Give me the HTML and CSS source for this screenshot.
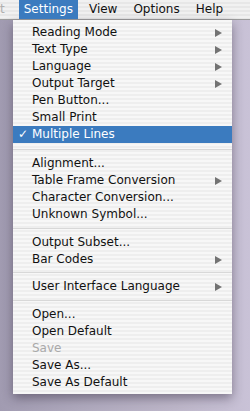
FILE: index.html
```html
<!DOCTYPE html>
<html lang="en">
<head>
    <meta charset="UTF-8">
    <meta name="viewport" content="width=device-width, initial-scale=1.0">
    <title>Settings Menu</title>
    <link rel="stylesheet" href="styles.css">
</head>
<body>
    <div class="menubar">
        <span class="bar-item edge">t</span>
        <span class="bar-item active">Settings</span>
        <span class="bar-item">View</span>
        <span class="bar-item">Options</span>
        <span class="bar-item">Help</span>
    </div>

    <div class="desk">
        <ul class="menu">
            <li class="item"><span class="check"></span>Reading Mode<span class="arrow"></span></li>
            <li class="item"><span class="check"></span>Text Type<span class="arrow"></span></li>
            <li class="item"><span class="check"></span>Language<span class="arrow"></span></li>
            <li class="item"><span class="check"></span>Output Target<span class="arrow"></span></li>
            <li class="item"><span class="check"></span>Pen Button...</li>
            <li class="item"><span class="check"></span>Small Print</li>
            <li class="item selected"><span class="check">✓</span>Multiple Lines</li>
            <li class="sep wide"></li>
            <li class="item"><span class="check"></span>Alignment...</li>
            <li class="item"><span class="check"></span>Table Frame Conversion<span class="arrow"></span></li>
            <li class="item"><span class="check"></span>Character Conversion...</li>
            <li class="item"><span class="check"></span>Unknown Symbol...</li>
            <li class="sep"></li>
            <li class="item"><span class="check"></span>Output Subset...</li>
            <li class="item"><span class="check"></span>Bar Codes<span class="arrow"></span></li>
            <li class="sep short"></li>
            <li class="item"><span class="check"></span>User Interface Language<span class="arrow"></span></li>
            <li class="sep"></li>
            <li class="item"><span class="check"></span>Open...</li>
            <li class="item"><span class="check"></span>Open Default</li>
            <li class="item disabled"><span class="check"></span>Save</li>
            <li class="item"><span class="check"></span>Save As...</li>
            <li class="item"><span class="check"></span>Save As Default</li>
        </ul>
    </div>
</body>
</html>
```

FILE: styles.css
```css
body {
    font-family: 'DejaVu Sans', 'Liberation Sans', sans-serif;
    font-size: 12px;
    color: #111;
    margin: 0;
    padding: 0;
    height: 411px;
    overflow: hidden;
    background: linear-gradient(to right, #a19bb1 0, #aea8bc 30%, #bdb6c9 70%, #c9c2d7 100%);
}

.menubar {
    display: flex;
    gap: 6px;
    height: 19px;
    line-height: 19px;
    border-bottom: 1px solid #9c9c9c;
    background: repeating-linear-gradient(to bottom, #f1f1f1 0, #f1f1f1 2px, #e7e7e7 2px, #e7e7e7 4px);
    white-space: nowrap;
}

.bar-item {
    padding: 0 5px;
}

.bar-item.edge {
    padding: 0 8px 0 0;
    color: #b0b0b0;
}

.bar-item.active {
    background: #3b7bbf;
    color: #fff;
}

.desk {
    padding-left: 13px;
}

.menu {
    list-style: none;
    margin: 0;
    padding: 4px 0 3px;
    width: 219px;
    background: repeating-linear-gradient(to bottom, #f7f7f7 0, #f7f7f7 2px, #eeeeee 2px, #eeeeee 4px);
    box-shadow: 0 4px 10px rgba(40, 30, 50, 0.45);
}

.item {
    display: flex;
    align-items: center;
    height: 17px;
    line-height: 17px;
    padding: 0 10px 0 5px;
    white-space: nowrap;
}

.check {
    width: 14px;
    flex: none;
    font-weight: bold;
}

.arrow {
    margin-left: auto;
    width: 0;
    height: 0;
    border-left: 7px solid #737373;
    border-top: 4px solid transparent;
    border-bottom: 4px solid transparent;
}

.selected {
    background: #3b7bbf;
    color: #fff;
}

.disabled {
    color: #a9a9a9;
}

.sep {
    height: 1px;
    margin: 5px 0;
    background: #d8d8d8;
}

.sep.wide {
    margin: 6px 0 5px;
}

.sep.short {
    margin: 4px 0 5px;
}
```
